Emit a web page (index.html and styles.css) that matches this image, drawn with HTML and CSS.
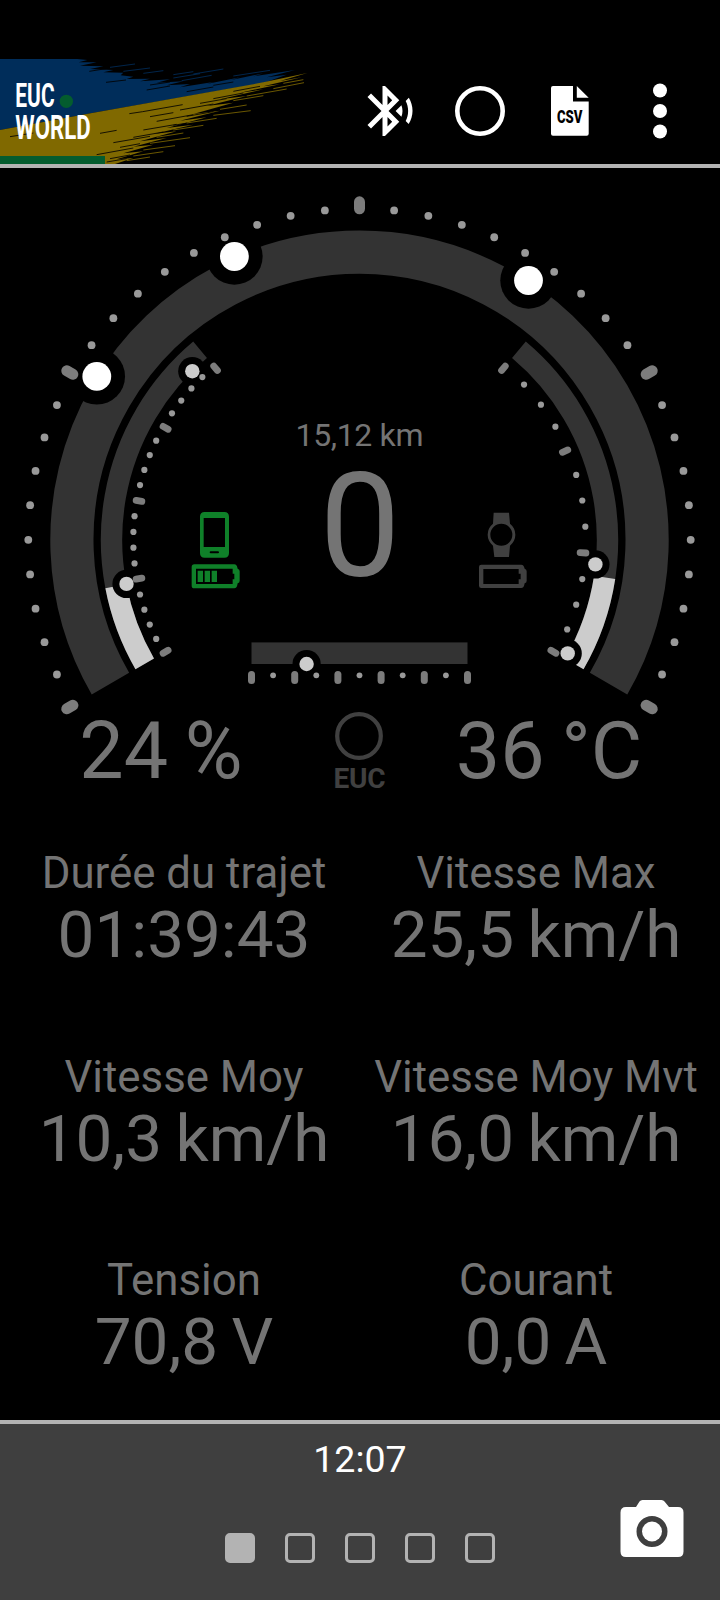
FILE: index.html
```html
<!DOCTYPE html>
<html lang="fr">
<head>
  <meta charset="UTF-8" />
  <title>EUC World</title>
  <link rel="stylesheet" href="styles.css">
</head>
<body>

<header class="topbar">
  <svg class="logo" viewBox="0 27 960 315">
    <path class="blue" d="M0 27H232L262 30 236 37 290 37 240 47 310 49 270 57 340 60 310 67 370 68 362 76 400 80 380 87 450 86 420 94 510 88 470 98 550 94 500 106 570 102 540 112 640 96 620 102 720 82 690 91 790 70 760 79 885 60 800 82 860 74 790 99 272 190 0 240Z" />
    <path class="yellow" d="M0 240L272 190 790 97 922 69 840 93 905 82 790 109 840 103 720 128 790 118 660 148 740 138 620 168 700 158 580 192 660 182 540 212 620 202 500 234 580 224 460 252 530 244 420 274 500 264 400 290 460 284 370 310 430 304 350 328 400 324 345 342H0Z" />
    <path class="streak-black" d="M268 64l50-8M318 97l60-7M440 120l70-12M450 105l60-9M560 125l80-14M640 106l60-10M388 191l40-6 120-21M30 260l70-11M540 180l100-18M560 199l80-14M470 214l110-20M640 146l90-17M700 124l80-15M430 240l100-17M300 250l50-9M400 262l90-16M340 278l110-19M360 292l60-11M290 314l110-20M330 326l60-11M320 336l60-10M600 160l80-14M520 226l60-10M450 200l70-12" />
    <path class="streak-blue" d="M330 52l75-10M370 64l80-10M520 84l80-13M545 92l90-16M580 72l90-15M700 78l110-17M520 74l60-9M430 70l60-8" />
    <path class="streak-yellow" d="M640 196l112-14M660 178l80-13M700 152l90-15M740 138l120-21M820 116l92-18M850 100l60-11M560 219l90-14M520 240l90-14M470 262l80-13M450 280l120-17M430 300l95-13M400 318l90-13M380 332l70-11" />
    <rect class="green" x="0" y="318" width="315" height="24" />
    <text x="46" y="170" textLength="118" lengthAdjust="spacingAndGlyphs">EUC</text>
    <text x="46" y="266" textLength="226" lengthAdjust="spacingAndGlyphs">WORLD</text>
    <circle class="green" cx="199" cy="154" r="20" />
  </svg>
  <nav class="actions">
    <svg viewBox="0 0 24 24">
      <path d="M14.24 12.01l2.32 2.32c.28-.72.44-1.51.44-2.33 0-.82-.16-1.59-.43-2.31l-2.33 2.32zm5.29-5.3l-1.26 1.26c.63 1.21.98 2.57.98 4.02s-.36 2.82-.98 4.02l1.2 1.2c.97-1.54 1.54-3.36 1.54-5.31-.01-1.89-.55-3.67-1.48-5.19zm-3.82 1L10 2H9v7.59L4.41 5 3 6.41 8.59 12 3 17.59 4.41 19 9 14.41V22h1l5.71-5.71-4.3-4.29 4.3-4.29zM11 5.83l1.88 1.88L11 9.59V5.83zm1.88 10.46L11 18.17v-3.76l1.88 1.88z" />
    </svg>
    <svg viewBox="0 0 60 60">
      <circle class="ring" cx="30" cy="30" r="22.7" />
    </svg>
    <svg viewBox="0 0 60 60">
      <path d="M11 7q0-2 2-2h20v15.500h15.700v32.200q0 2-2 2H13q-2 0-2-2zM36.800 5l11.900 11.800H36.800z" />
      <text class="csv" x="17" y="42.3" textLength="25.5" lengthAdjust="spacingAndGlyphs">CSV</text>
    </svg>
    <svg viewBox="0 0 60 60">
      <circle cx="30" cy="9.5" r="7" />
      <circle cx="30" cy="30" r="7" />
      <circle cx="30" cy="50.5" r="7" />
    </svg>
  </nav>
</header>

<main>
  <svg class="gauge" viewBox="0 168 720 640">
    <path id="speedArc" class="track" stroke-width="43.2" />
    <path id="batteryArc" class="track" stroke-width="21.4" />
    <path id="tempArc" class="track" stroke-width="21.4" />
    <path id="batteryValue" class="value" stroke-width="21.4" />
    <path id="tempValue" class="value" stroke-width="21.4" />
    <rect class="bar" x="251.500" y="642.4" width="216" height="21.6" />
    <g id="halos"></g>
    <g id="ticks"></g>
    <g id="knobs"></g>

    <text x="359.5" y="446.3" font-size="32" textLength="128" lengthAdjust="spacing">15,12 km</text>
    <text x="360" y="576" font-size="144">0</text>
    <text class="reading" x="161" y="777.5" font-size="79">24 %</text>
    <text class="reading" x="549" y="777.5" font-size="79">36 °C</text>

    <!-- phone + battery -->
    <g class="phone" transform="translate(0 460) scale(.33333)">
      <path fill-rule="evenodd" d="M614 156h59q14 0 14 14v109q0 14-14 14h-59q-14 0-14-14V170q0-14 14-14zM611 174v87h64v-87zM632 273.500q-3 0-3 3t3 3h22q3 0 3-3t-3-3z" />
      <path fill-rule="evenodd" d="M583 313h120q6 0 8 6l2 7q6 2 6 8v28q0 6-6 8l-2 9q-2 6-8 6H583q-8 0-8-8v-56q0-8 8-8zM588 326v46h110v-14h5v-17h-5v-15z" />
      <path d="M593 332h16v34h-16zM614 332h16v34h-16zM635 332h16v34h-16z" />
    </g>

    <!-- watch + battery -->
    <g class="watch" transform="translate(360 460) scale(.33333)">
      <path fill-rule="evenodd" d="M401 158h46l3 33a42 42 0 0 1 0 66l-3 34h-44l-4-34a42 42 0 0 1 0-66zM457 224a33 33 0 1 0-66 0 33 33 0 1 0 66 0z" />
      <path fill-rule="evenodd" d="M364 314h120q6 0 8 6l2 6q6 2 6 8v28q0 6-6 8l-2 8q-2 6-8 6H364q-7 0-7-7v-56q0-7 7-7zM370 327v45h106v-14h6v-17h-6v-14z" />
    </g>

    <circle class="wheel" cx="359" cy="736" r="21.8" />
    <text class="euc" x="359.500" y="788" textLength="52" lengthAdjust="spacing">EUC</text>
  </svg>

  <section class="stats">
    <div class="stat"><span class="label">Durée du trajet</span><span class="number">01:39:43</span></div>
    <div class="stat"><span class="label">Vitesse Max</span><span class="number">25,5 km/h</span></div>
    <div class="stat"><span class="label">Vitesse Moy</span><span class="number">10,3 km/h</span></div>
    <div class="stat"><span class="label">Vitesse Moy Mvt</span><span class="number">16,0 km/h</span></div>
    <div class="stat"><span class="label">Tension</span><span class="number">70,8 V</span></div>
    <div class="stat"><span class="label">Courant</span><span class="number">0,0 A</span></div>
  </section>
</main>

<footer class="bottombar">
  <div class="clock">12:07</div>
  <div class="pages">
    <span class="page active"></span>
    <span class="page"></span>
    <span class="page"></span>
    <span class="page"></span>
    <span class="page"></span>
  </div>
  <svg class="camera" viewBox="0 0 64 58">
    <path fill-rule="evenodd" d="M22.500 0h19q2 0 3 1.500L49 7h9q5.500 0 5.500 5.500v39q0 5.500-5.500 5.500H6Q.5 57 .5 51.500v-39Q.5 7 6 7h10l3.500-5.500q1-1.500 3-1.500zM47.500 31.500a15.500 15.500 0 1 0-31 0 15.500 15.500 0 1 0 31 0z" />
    <circle cx="32" cy="31.500" r="10" />
  </svg>
</footer>

<script>
  const cx = 359.5;
  const cy = 539.8;

  // 0 deg = top, clockwise
  function point(r, deg) {
    let a = (deg - 90) * Math.PI / 180;
    return [cx + r * Math.cos(a), cy + r * Math.sin(a)];
  }

  function setArc(id, r, from, to) {
    let large = to - from > 180 ? 1 : 0;
    document.getElementById(id).setAttribute("d",
      `M${point(r, from)} A${r} ${r} 0 ${large} 1 ${point(r, to)}`);
  }

  setArc("speedArc", 287.6, -120, 120);
  setArc("batteryArc", 248, -120, -40);
  setArc("tempArc", 248, 40, 120);
  setArc("batteryValue", 248, -120, -100.8);
  setArc("tempValue", 248, 98.7, 120);

  let ticks = "";

  function addTicks(from, to, count, every, dotR, dotSize, r1, r2, width) {
    for (let i = 0; i <= count; i++) {
      let deg = from + (to - from) * i / count;
      if (i % every === 0) {
        let [x1, y1] = point(r1, deg);
        let [x2, y2] = point(r2, deg);
        ticks += `<line x1="${x1}" y1="${y1}" x2="${x2}" y2="${y2}" stroke-width="${width}" />`;
      } else {
        let [x, y] = point(dotR, deg);
        ticks += `<circle cx="${x}" cy="${y}" r="${dotSize}" />`;
      }
    }
  }

  addTicks(-120, 120, 40, 10, 331.2, 3.9, 331, 338, 11);
  addTicks(-120, -40, 20, 5, 226.2, 3.1, 221, 226.8, 6.8);
  addTicks(40, 120, 12, 4, 226.2, 3.1, 221, 226.8, 6.8);

  for (let i = 0; i <= 10; i++) {
    let x = 251.5 + i * 21.6;
    ticks += i % 2 === 0
      ? `<line x1="${x}" y1="674.5" x2="${x}" y2="680.5" stroke-width="7" />`
      : `<circle cx="${x}" cy="675.3" r="2.9" />`;
  }
  document.getElementById("ticks").innerHTML = ticks;

  const knobs = [
    [96.8, 376.4, 14.4, "big"], [234.4, 256.5, 14.4, "big"], [528.5, 280.5, 14.4, "big"],
    [192.3, 371.2, 7.2, ""], [126.5, 583.9, 7.2, ""],
    [595.4, 564.4, 7.2, ""], [567.7, 653.4, 7.2, ""], [306.6, 664, 7.2, ""]
  ];
  document.getElementById("halos").innerHTML =
    knobs.map(([x, y, r]) => `<circle cx="${x}" cy="${y}" r="${r * 1.96}" />`).join("");
  document.getElementById("knobs").innerHTML =
    knobs.map(([x, y, r, cls]) => `<circle class="${cls}" cx="${x}" cy="${y}" r="${r}" />`).join("");
</script>

</body>
</html>
```
FILE: styles.css
```css
body {
    margin: 0;
    height: 1600px;
    box-sizing: border-box;
    padding-top: 59px;
    background-color: #000;
    color: #747474;
    font-family: Roboto, sans-serif;
    overflow: hidden;
}

.topbar {
    display: flex;
    justify-content: space-between;
    height: 105px;
    border-bottom: 4px solid #b3b3b3;
}

.logo {
    width: 320px;
    height: 105px;
}

.logo .blue {
    fill: #002d5a;
}

.logo .yellow {
    fill: #806900;
}

.logo .green {
    fill: #045c2e;
}

.logo text {
    fill: #fff;
    font-size: 99px;
    font-weight: bold;
}

.logo path[class^="streak"] {
    fill: none;
    stroke-width: 2.5;
}

.streak-black {
    stroke: #000;
}

.streak-blue {
    stroke: #002d5a;
}

.streak-yellow {
    stroke: #806900;
}

.actions {
    display: flex;
    gap: 30px;
    padding: 22px 30px 0 0;
}

.actions svg {
    width: 60px;
    height: 60px;
    fill: #fff;
}

.actions .ring {
    fill: none;
    stroke: #fff;
    stroke-width: 4.6;
}

.actions .csv {
    fill: #000;
    font-size: 18px;
    font-weight: 900;
}

.gauge {
    display: block;
    width: 720px;
    height: 640px;
}

.gauge text {
    fill: #747474;
    text-anchor: middle;
}

.gauge .reading {
    word-spacing: -3px;
}

.track {
    fill: none;
    stroke: #333;
}

.value {
    fill: none;
    stroke: #ccc;
}

.bar {
    fill: #333;
}

#ticks circle {
    fill: #999;
}

#ticks line {
    stroke: #7c7c7c;
    stroke-linecap: round;
}

#knobs circle {
    fill: #ccc;
}

#knobs .big {
    fill: #fff;
}

.phone {
    fill: #0f8029;
}

.watch {
    fill: #404040;
}

.wheel {
    fill: none;
    stroke: #404040;
    stroke-width: 4.2;
}

.gauge .euc {
    fill: #404040;
    font-size: 28px;
    font-weight: bold;
}

.stats {
    display: grid;
    grid-template-columns: repeat(2, 352px);
    grid-auto-rows: 203.5px;
    justify-content: center;
    height: 612px;
    padding-top: 39px;
    box-sizing: border-box;
}

.stat {
    display: flex;
    flex-direction: column;
    align-items: center;
    white-space: nowrap;
}

.label {
    font-size: 43.8px;
    line-height: 53px;
}

.number {
    font-size: 65.6px;
    line-height: 70px;
    word-spacing: -3px;
}

.bottombar {
    display: grid;
    grid-template-columns: 1fr auto 1fr;
    grid-template-rows: 68px 108px;
    height: 180px;
    box-sizing: border-box;
    border-top: 4px solid #b3b3b3;
    background-color: #3f3f3f;
}

.clock {
    grid-column: 1 / 4;
    color: #fff;
    font-size: 37.5px;
    line-height: 71px;
    text-align: center;
}

.pages {
    grid-column: 2;
    display: flex;
    gap: 30px;
    margin-top: 41px;
}

.page {
    width: 30px;
    height: 30px;
    box-sizing: border-box;
    border: 3px solid #b3b3b3;
    border-radius: 5px;
}

.page.active {
    background-color: #b3b3b3;
}

.camera {
    justify-self: end;
    width: 64px;
    height: 58px;
    margin: 8px 36px 0 0;
    fill: #fff;
}
```
